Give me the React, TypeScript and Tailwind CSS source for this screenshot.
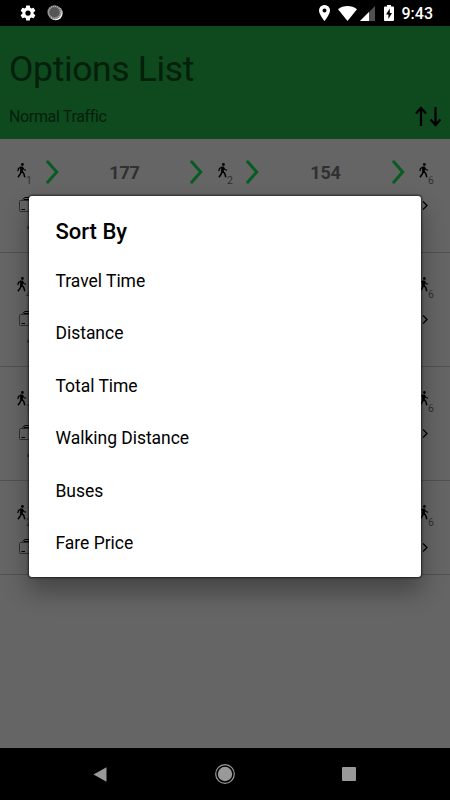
import React from 'react';

interface Route {
  walk: string;
}

const routes: Route[] = [{ walk: '1' }, { walk: '4' }, { walk: '10' }, { walk: '2' }];

const sortOptions = [
  'Travel Time',
  'Distance',
  'Total Time',
  'Walking Distance',
  'Buses',
  'Fare Price'
];

const StatusBar: React.FC = () => (
  <div className="flex h-[26px] shrink-0 items-center bg-black text-white">
    <svg className="ml-[19px] h-[18px] w-[18px]" viewBox="0 0 24 24" fill="currentColor">
      <path d="M19.43 12.98c.04-.32.07-.64.07-.98s-.03-.66-.07-.98l2.11-1.65c.19-.15.24-.42.12-.64l-2-3.46c-.12-.22-.39-.3-.61-.22l-2.49 1c-.52-.4-1.08-.73-1.69-.98l-.38-2.65A.49.49 0 0 0 14 2h-4c-.25 0-.46.18-.49.42l-.38 2.65c-.61.25-1.17.59-1.69.98l-2.49-1c-.23-.09-.49 0-.61.22l-2 3.46c-.13.22-.07.49.12.64l2.11 1.65c-.04.32-.07.65-.07.98s.03.66.07.98l-2.11 1.65c-.19.15-.24.42-.12.64l2 3.46c.12.22.39.3.61.22l2.49-1c.52.4 1.08.73 1.69.98l.38 2.65c.03.24.24.42.49.42h4c.25 0 .46-.18.49-.42l.38-2.65c.61-.25 1.17-.59 1.69-.98l2.49 1c.23.09.49 0 .61-.22l2-3.46c.12-.22.07-.49-.12-.64l-2.11-1.65zM12 15.500a3.500 3.500 0 1 1 0-7 3.500 3.500 0 0 1 0 7z" />
    </svg>
    <svg className="ml-[10px] h-4 w-4" viewBox="0 0 16 16">
      <circle cx="8.600" cy="8.300" r="7" fill="#fff" />
      <circle cx="7.500" cy="7.300" r="7.100" fill="#777" />
      <circle cx="7.500" cy="7.300" r="6" fill="none" stroke="#bbb" strokeWidth="1.200" strokeDasharray="1 1" />
      <circle cx="7.500" cy="7.300" r="5" fill="#555" />
    </svg>
    <div className="ml-auto flex items-center">
      <svg className="h-4 w-[11px]" viewBox="0 0 11 16" fill="currentColor">
        <path fillRule="evenodd" d="M5.500 0A5.400 5.400 0 0 0 0 5.500C0 9.600 5.500 16 5.500 16S11 9.600 11 5.500A5.400 5.400 0 0 0 5.500 0zm0 3.500a2 2 0 1 1 0 4 2 2 0 0 1 0-4z" />
      </svg>
      <svg className="ml-[8px] h-[15px] w-[19px]" viewBox="0 0 19 15" fill="currentColor">
        <path d="M0 3.200C5.500-1 13.500-1 19 3.200L9.500 15z" />
      </svg>
      <svg className="ml-[3px] h-[15px] w-[15px]" viewBox="0 0 15 15">
        <path d="M0 15L15 0v15z" fill="#505050" />
        <path d="M0 15l9-9v9z" fill="#fff" />
      </svg>
      <svg className="ml-[9px] h-4 w-[10px]" viewBox="0 0 10 16">
        <path d="M3 0h4v1.500h2q1 0 1 1V15q0 1-1 1H1q-1 0-1-1V2.500q0-1 1-1h2z" fill="#fff" />
        <path d="M5.800 3.500L2 9.500h2.400V14L8 8H5.800z" fill="#000" />
      </svg>
      <span className="ml-[8px] mr-[17px] pt-[2px] text-[16px] font-medium leading-none">9:43</span>
    </div>
  </div>
);

const Header: React.FC = () => (
  <header className="h-[113px] shrink-0 bg-[#0f491e] px-[9px] text-[#04200b]">
    <h1 className="pt-[22px] text-[35.500px] leading-[42px] tracking-[-0.350px]">Options List</h1>
    <div className="flex items-center justify-between pt-[13px]">
      <span className="pt-px text-[16px] leading-[25px] tracking-[-0.350px]">Normal Traffic</span>
      <svg className="h-[21px] w-[26px]" viewBox="0 0 26 21" fill="none" stroke="#000" strokeWidth="2.200">
        <path d="M6 20V2M1 7.500l5-5.500 5 5.500M20.500 1v18M15.500 13.500l5 5.500 5-5.500" />
      </svg>
    </div>
  </header>
);

const Walk: React.FC<{ count: string }> = ({ count }) => (
  <div className="flex h-[28px] w-[20px] shrink-0">
    <svg className="mt-[5px] h-[15px] w-[10px] shrink-0" viewBox="0 0 10 15" fill="none" stroke="#000">
      <circle cx="5.400" cy="1.500" r="1.400" fill="#000" stroke="none" />
      <path d="M4.700 3.700l-.3 5" strokeWidth="2.800" />
      <path d="M4.200 4L1.500 5.500.8 8.200M5.300 4.200l1.600 2.300 2.200.7" strokeWidth="1.200" />
      <path d="M4.200 8.200L3.300 11 1 14.300M4.800 8.200l2 2.300 1 3.700" strokeWidth="1.500" />
    </svg>
    <span className="-ml-px self-end text-[10.500px] leading-[11px] text-[#303030]">{count}</span>
  </div>
);

const Chevron: React.FC = () => (
  <svg className="h-6 w-[13px] shrink-0" viewBox="0 0 13 24" fill="none" stroke="#075c21" strokeWidth="3" strokeLinecap="round">
    <path d="M1.700 1.800L10.700 12l-9 10.200" />
  </svg>
);

const RouteRow: React.FC<Route> = ({ walk }) => (
  <li className="group h-[114px] border-b border-[#515151] last:h-[94px]">
    <div className="flex h-[47px] items-center pl-[17px] pt-[19px]">
      <Walk count={walk} />
      <div className="ml-[9px] flex w-[157px] items-center justify-between">
        <Chevron />
        <span className="pt-px text-[18px] font-bold leading-6 tracking-[-0.200px] text-[#303030]">177</span>
        <Chevron />
      </div>
      <div className="ml-[15px]">
        <Walk count="2" />
      </div>
      <div className="ml-[8px] flex w-[159px] items-center justify-between">
        <Chevron />
        <span className="pt-px text-[18px] font-bold leading-6 tracking-[-0.200px] text-[#303030]">154</span>
        <Chevron />
      </div>
      <div className="ml-[14px]">
        <Walk count="6" />
      </div>
    </div>
    <div className="flex items-start justify-between pl-[19px] pr-[22px] pt-[10px]">
      <svg className="h-[16px] w-[18px]" viewBox="0 0 18 16" fill="none" stroke="#303030">
        <rect x=".5" y="4.500" width="16" height="11" rx="1" />
        <path d="M3.500 3.500L6 1.500h9M5 3.500h10M2.500 13.500h3.500" stroke="#000" />
      </svg>
      <svg className="mt-[5px] h-[9px] w-[6px]" viewBox="0 0 6 9" fill="none" stroke="#000" strokeWidth="1.300">
        <path d="M1 .5l4 4-4 4" />
      </svg>
    </div>
    <div className="ml-[27px] mt-[14px] h-[3px] w-[5px] bg-[#244c30] group-last:hidden"></div>
  </li>
);

const SortDialog: React.FC = () => (
  <div
    role="dialog"
    className="absolute left-[29px] top-[196px] h-[381px] w-[392px] rounded-[3px] bg-white px-[26.500px] pt-[20px] text-black shadow-[0_0_2px_1px_rgba(0,0,0,0.6),0_14px_24px_1px_rgba(0,0,0,0.32)]"
  >
    <h2 className="pt-px text-[22px] font-medium leading-[30px]">Sort By</h2>
    <ul className="pt-[7.500px]">
      {sortOptions.map((option) => (
        <li key={option} className="flex h-[52.500px] items-center text-[17.500px] tracking-[-0.030px]">
          {option}
        </li>
      ))}
    </ul>
  </div>
);

const NavigationBar: React.FC = () => (
  <nav className="flex h-[52px] shrink-0 items-center justify-between bg-black pl-[93px] pr-[94px]">
    <svg className="h-[15px] w-[14px]" viewBox="0 0 14 15" fill="#999">
      <path d="M.5 7.500L13.500.2v14.600z" />
    </svg>
    <svg className="h-5 w-5" viewBox="0 0 20 20">
      <circle cx="10" cy="10" r="9.300" fill="none" stroke="#999" strokeWidth="1.200" />
      <circle cx="10" cy="10" r="7.200" fill="#999" />
    </svg>
    <div className="h-[14px] w-[14px] rounded-[1px] bg-[#999]"></div>
  </nav>
);

const App: React.FC = () => {
  return (
    <div className="relative flex h-[800px] w-[450px] flex-col overflow-hidden bg-[#656565] font-['Roboto',sans-serif]">
      <StatusBar />
      <Header />
      <ul className="flex-1">
        {routes.map((route) => (
          <RouteRow key={route.walk} walk={route.walk} />
        ))}
      </ul>
      <NavigationBar />
      <SortDialog />
    </div>
  );
};

export default App;
